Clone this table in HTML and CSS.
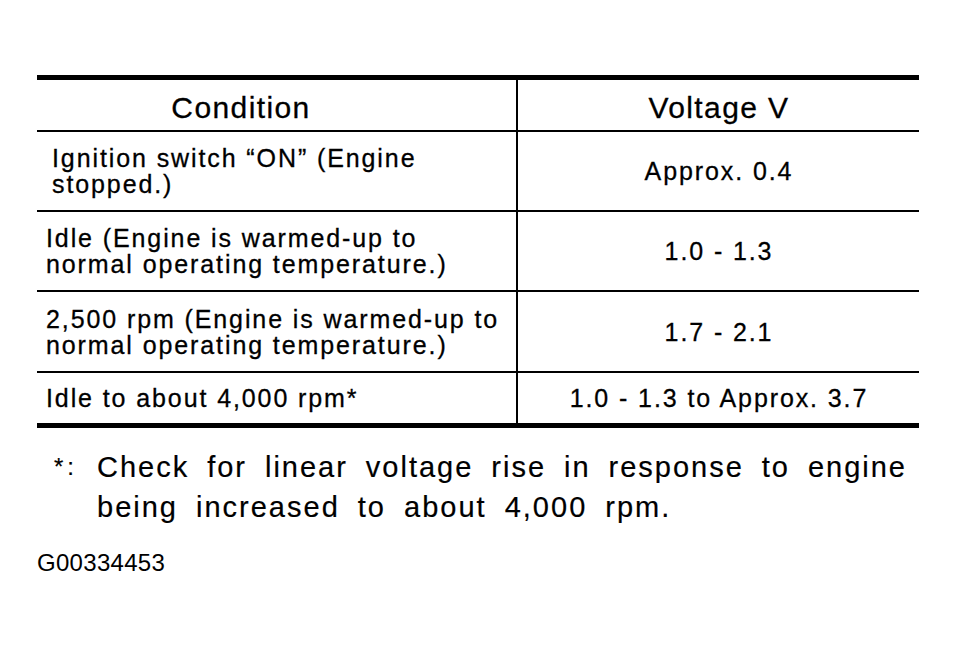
FILE: index.html
```html
<!DOCTYPE html>
<html>
<head>
<meta charset="utf-8">
<title>Condition / Voltage</title>
<link rel="stylesheet" href="styles.css">
</head>
<body>
<div class="sheet">
  <div class="spec">
    <div class="row head">
      <div class="cell cond">Condition</div>
      <div class="cell volt">Voltage V</div>
    </div>
    <div class="row tall">
      <div class="cell cond indent">Ignition switch “ON” (Engine<br>stopped.)</div>
      <div class="cell volt">Approx. 0.4</div>
    </div>
    <div class="row tall">
      <div class="cell cond">Idle (Engine is warmed-up to<br>normal operating temperature.)</div>
      <div class="cell volt">1.0 - 1.3</div>
    </div>
    <div class="row tall tall-b">
      <div class="cell cond">2,500 rpm (Engine is warmed-up to<br>normal operating temperature.)</div>
      <div class="cell volt">1.7 - 2.1</div>
    </div>
    <div class="row short last">
      <div class="cell cond">Idle to about 4,000 rpm*</div>
      <div class="cell volt">1.0 - 1.3 to Approx. 3.7</div>
    </div>
  </div>

  <div class="note">
    <span class="mark">*:</span>
    <div class="note-text">
      <div class="note-line first">Check for linear voltage rise in response to engine</div>
      <div class="note-line">being increased to about 4,000 rpm.</div>
    </div>
  </div>

  <div class="code">G00334453</div>
</div>
</body>
</html>
```

FILE: styles.css
```css
html, body {
  margin: 0;
  padding: 0;
  background: #fff;
}

body {
  font-family: "Liberation Sans", Arial, sans-serif;
  color: #000;
}

.sheet {
  padding: 75px 0 0 37px;
}

.spec {
  width: 882px;
  border-top: 5px solid #000;
}

.row {
  display: grid;
  grid-template-columns: 481px 1fr;
  border-bottom: 2px solid #000;
}

.row.head { height: 50px; }
.row.tall { height: 78px; }
.row.tall-b { height: 79px; }
.row.short { height: 50px; }
.row.last { border-bottom: 5px solid #000; }

.cell {
  display: flex;
  align-items: center;
  font-size: 25px;
  line-height: 26px;
  letter-spacing: 1.9px;
  -webkit-text-stroke: 0.3px #000;
}

.cond {
  border-right: 2px solid #000;
  padding-left: 9px;
}

.cond.indent {
  padding-left: 15px;
}

.volt {
  justify-content: center;
  padding-left: 1px;
}

.head .cell {
  font-size: 30px;
  letter-spacing: 1.4px;
  padding-top: 6px;
}

.head .cond {
  justify-content: center;
  padding-left: 0;
  padding-right: 71px;
}

.note {
  display: flex;
  margin-top: 19px;
  margin-left: 17px;
  font-size: 29px;
  line-height: 40px;
  letter-spacing: 2px;
  -webkit-text-stroke: 0.2px #000;
}

.mark {
  width: 43px;
  flex: none;
  font-size: 24px;
  letter-spacing: 4px;
}

.note-text {
  width: 810px;
}

.note-line {
  white-space: nowrap;
  word-spacing: 8px;
}

.note-line.first {
  text-align: justify;
  text-align-last: justify;
  word-spacing: 6px;
}

.code {
  margin-top: 21px;
  font-size: 24px;
  line-height: 30px;
  letter-spacing: 0.3px;
}
```
